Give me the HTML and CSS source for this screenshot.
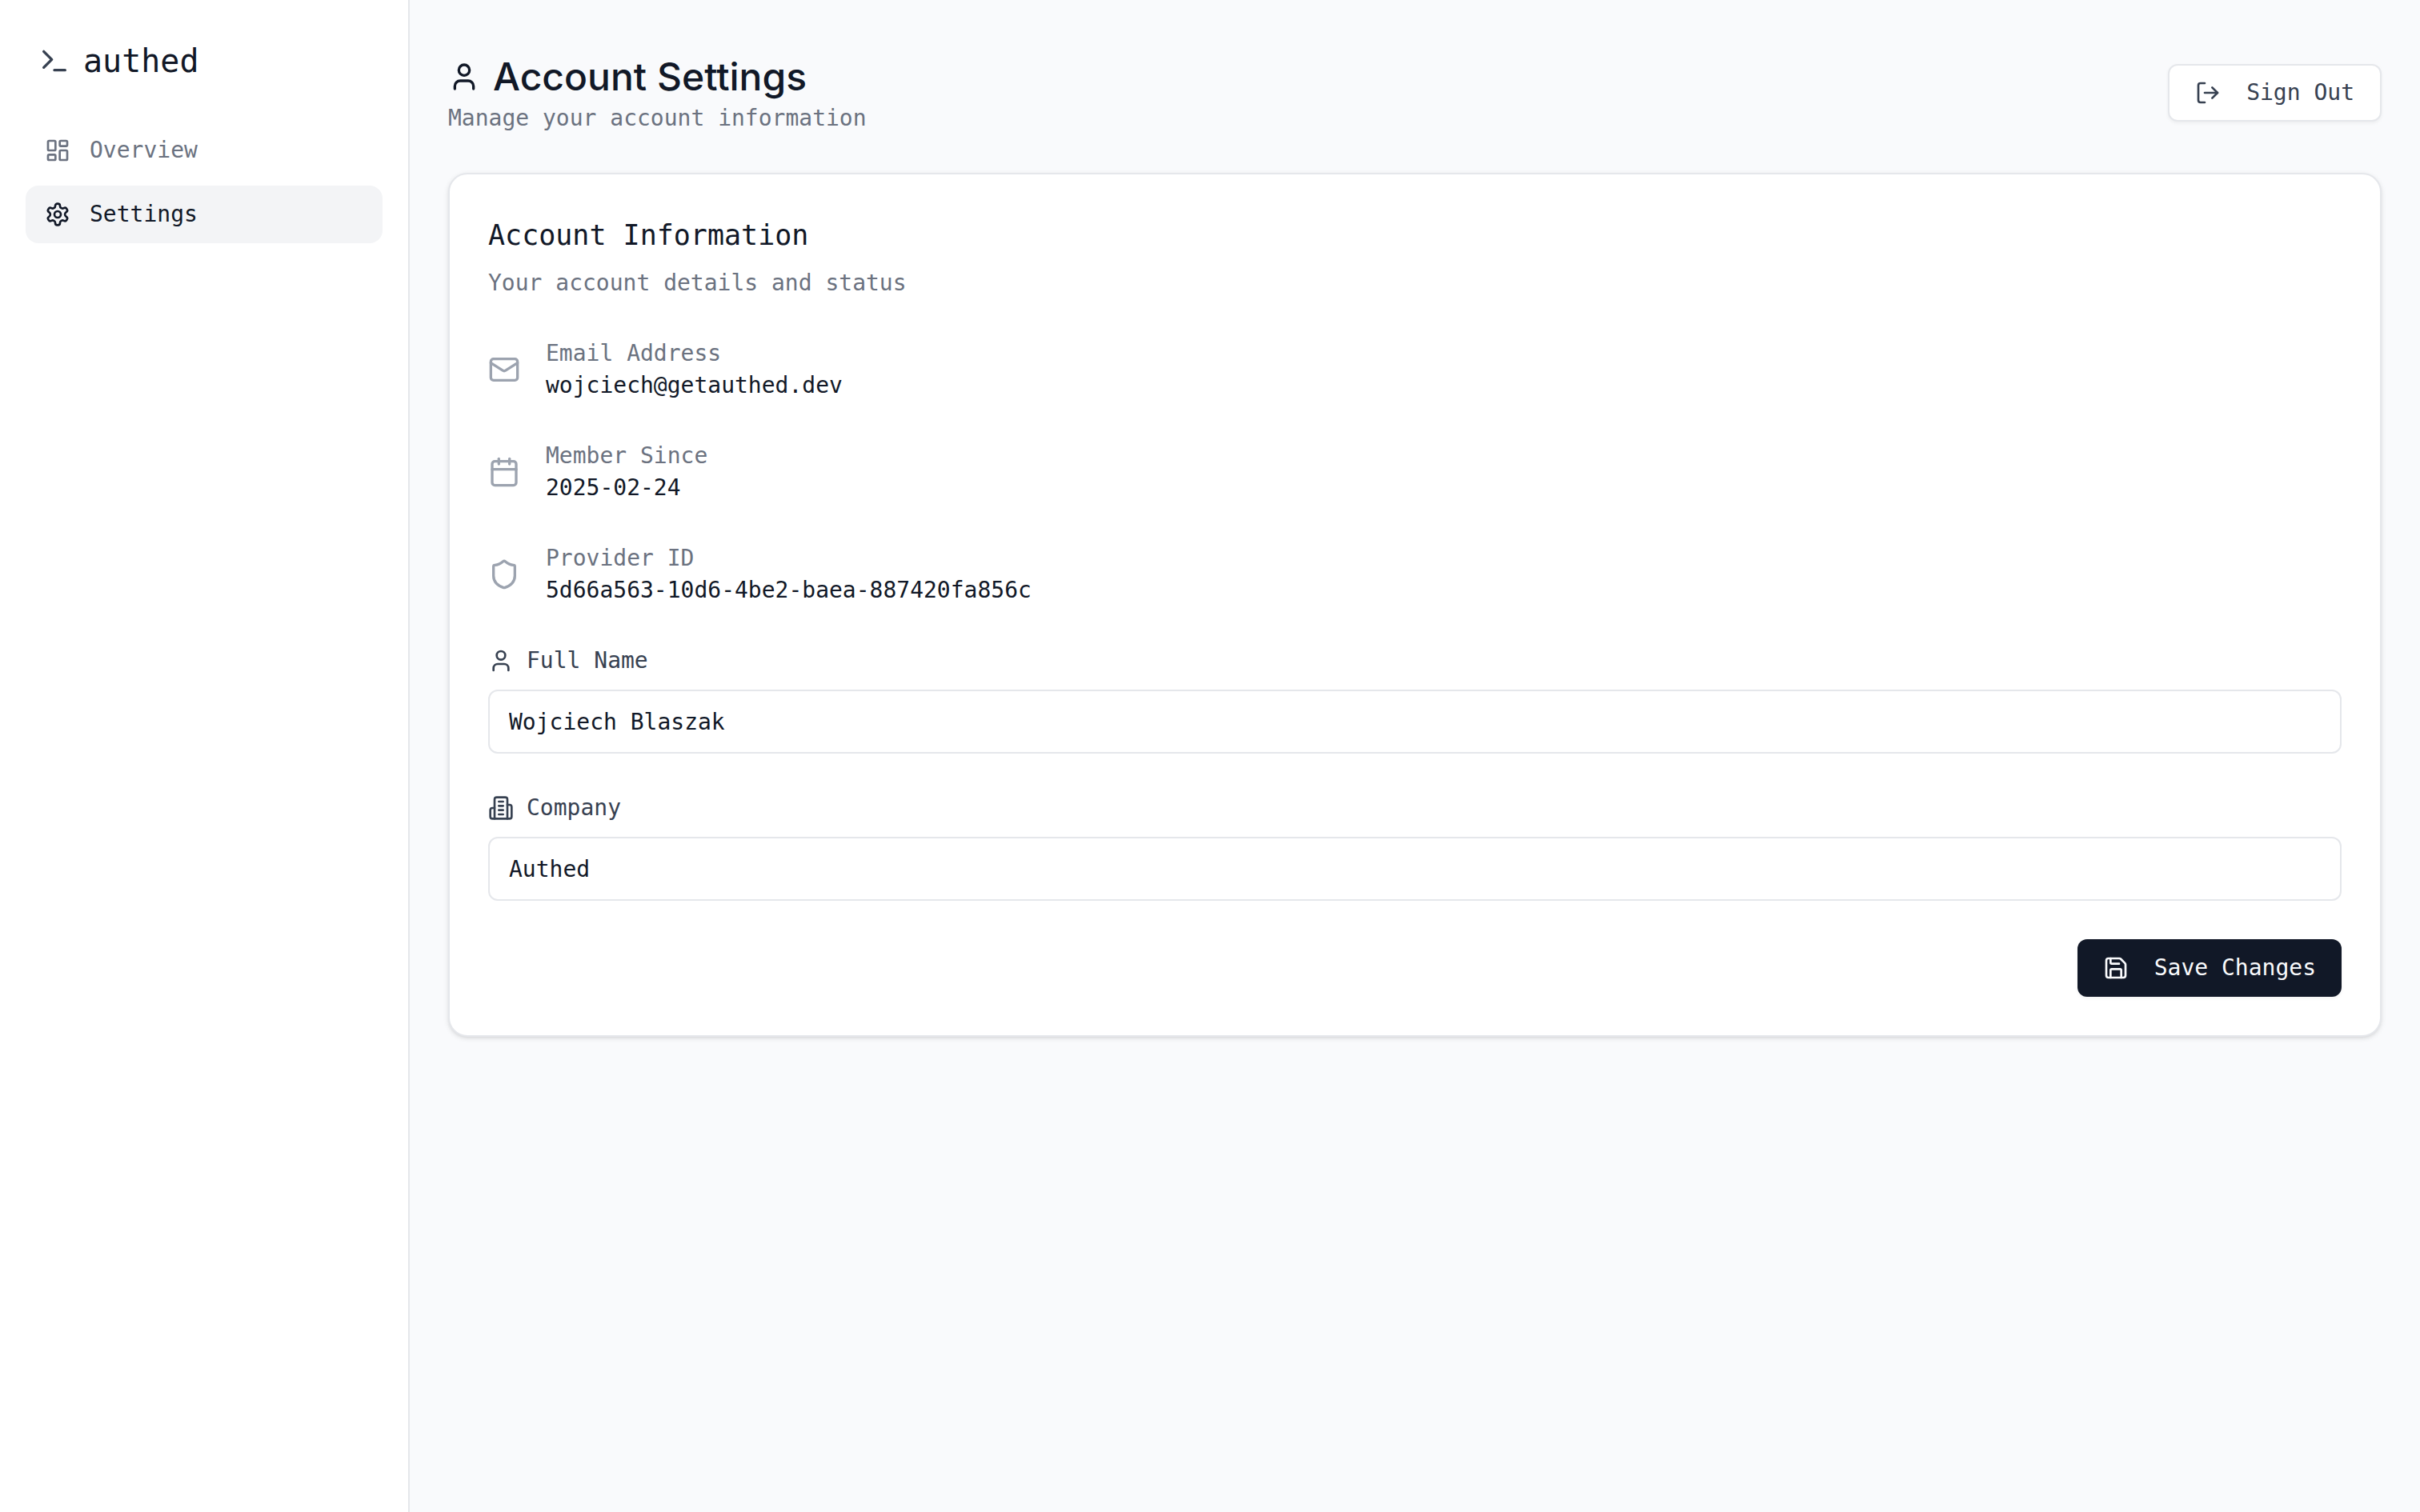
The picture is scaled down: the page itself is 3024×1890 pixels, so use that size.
FILE: index.html
```html
<!DOCTYPE html>
<html lang="en">
<head>
  <meta charset="utf-8">
  <meta name="viewport" content="width=device-width, initial-scale=1">
  <title>Account Settings · authed</title>
  <link rel="stylesheet" href="styles.css">
</head>
<body>
  <div class="app">
    <aside class="sidebar">
      <a class="logo" href="#">
        <svg class="icon icon-lg" viewBox="0 0 24 24" aria-hidden="true"><path d="m4 17 6-6-6-6"/><path d="M12 19h8"/></svg>
        <span>authed</span>
      </a>
      <nav class="nav">
        <a class="nav-link" href="#">
          <svg class="icon" viewBox="0 0 24 24" aria-hidden="true"><rect width="7" height="9" x="3" y="3" rx="1"/><rect width="7" height="5" x="14" y="3" rx="1"/><rect width="7" height="9" x="14" y="12" rx="1"/><rect width="7" height="5" x="3" y="16" rx="1"/></svg>
          <span>Overview</span>
        </a>
        <a class="nav-link active" href="#" aria-current="page">
          <svg class="icon" viewBox="0 0 24 24" aria-hidden="true"><path d="M12.22 2h-.44a2 2 0 0 0-2 2v.18a2 2 0 0 1-1 1.73l-.43.25a2 2 0 0 1-2 0l-.15-.08a2 2 0 0 0-2.73.73l-.22.38a2 2 0 0 0 .73 2.73l.15.1a2 2 0 0 1 1 1.72v.51a2 2 0 0 1-1 1.74l-.15.09a2 2 0 0 0-.73 2.73l.22.38a2 2 0 0 0 2.73.73l.15-.08a2 2 0 0 1 2 0l.43.25a2 2 0 0 1 1 1.73V20a2 2 0 0 0 2 2h.44a2 2 0 0 0 2-2v-.18a2 2 0 0 1 1-1.73l.43-.25a2 2 0 0 1 2 0l.15.08a2 2 0 0 0 2.73-.73l.22-.39a2 2 0 0 0-.73-2.73l-.15-.08a2 2 0 0 1-1-1.74v-.5a2 2 0 0 1 1-1.74l.15-.09a2 2 0 0 0 .73-2.73l-.22-.38a2 2 0 0 0-2.73-.73l-.15.08a2 2 0 0 1-2 0l-.43-.25a2 2 0 0 1-1-1.73V4a2 2 0 0 0-2-2z"/><circle cx="12" cy="12" r="3"/></svg>
          <span>Settings</span>
        </a>
      </nav>
    </aside>

    <main class="main">
      <header class="page-header">
        <div>
          <h1 class="page-title">
            <svg class="icon icon-lg" viewBox="0 0 24 24" aria-hidden="true"><path d="M19 21v-2a4 4 0 0 0-4-4H9a4 4 0 0 0-4 4v2"/><circle cx="12" cy="7" r="4"/></svg>
            <span>Account Settings</span>
          </h1>
          <p class="muted">Manage your account information</p>
        </div>
        <button class="button button-outline" type="button">
          <svg class="icon" viewBox="0 0 24 24" aria-hidden="true"><path d="M9 21H5a2 2 0 0 1-2-2V5a2 2 0 0 1 2-2h4"/><path d="m16 17 5-5-5-5"/><path d="M21 12H9"/></svg>
          <span>Sign Out</span>
        </button>
      </header>

      <section class="card">
        <div class="card-header">
          <h2 class="card-title">Account Information</h2>
          <p class="muted">Your account details and status</p>
        </div>

        <dl class="details">
          <div class="detail">
            <svg class="icon icon-lg" viewBox="0 0 24 24" aria-hidden="true"><rect width="20" height="16" x="2" y="4" rx="2"/><path d="m22 7-8.97 5.7a1.94 1.94 0 0 1-2.06 0L2 7"/></svg>
            <div>
              <dt class="muted">Email Address</dt>
              <dd class="value">wojciech@getauthed.dev</dd>
            </div>
          </div>
          <div class="detail">
            <svg class="icon icon-lg" viewBox="0 0 24 24" aria-hidden="true"><path d="M8 2v4"/><path d="M16 2v4"/><rect width="18" height="18" x="3" y="4" rx="2"/><path d="M3 10h18"/></svg>
            <div>
              <dt class="muted">Member Since</dt>
              <dd class="value">2025-02-24</dd>
            </div>
          </div>
          <div class="detail">
            <svg class="icon icon-lg" viewBox="0 0 24 24" aria-hidden="true"><path d="M20 13c0 5-3.5 7.5-7.66 8.95a1 1 0 0 1-.67-.01C7.5 20.5 4 18 4 13V6a1 1 0 0 1 1-1c2 0 4.5-1.2 6.24-2.72a1.17 1.17 0 0 1 1.52 0C14.51 3.81 17 5 19 5a1 1 0 0 1 1 1z"/></svg>
            <div>
              <dt class="muted">Provider ID</dt>
              <dd class="value">5d66a563-10d6-4be2-baea-887420fa856c</dd>
            </div>
          </div>
        </dl>

        <form class="form">
          <div class="field">
            <label class="label" for="full-name">
              <svg class="icon" viewBox="0 0 24 24" aria-hidden="true"><path d="M19 21v-2a4 4 0 0 0-4-4H9a4 4 0 0 0-4 4v2"/><circle cx="12" cy="7" r="4"/></svg>
              <span>Full Name</span>
            </label>
            <input class="input" id="full-name" name="name" type="text" value="Wojciech Blaszak">
          </div>
          <div class="field">
            <label class="label" for="company">
              <svg class="icon" viewBox="0 0 24 24" aria-hidden="true"><path d="M6 22V4a2 2 0 0 1 2-2h8a2 2 0 0 1 2 2v18Z"/><path d="M6 12H4a2 2 0 0 0-2 2v6a2 2 0 0 0 2 2h2"/><path d="M18 9h2a2 2 0 0 1 2 2v9a2 2 0 0 1-2 2h-2"/><path d="M10 6h4"/><path d="M10 10h4"/><path d="M10 14h4"/><path d="M10 18h4"/></svg>
              <span>Company</span>
            </label>
            <input class="input" id="company" name="company" type="text" value="Authed">
          </div>
          <div class="actions">
            <button class="button button-primary" type="submit">
              <svg class="icon" viewBox="0 0 24 24" aria-hidden="true"><path d="M15.2 3a2 2 0 0 1 1.4.6l3.8 3.8a2 2 0 0 1 .6 1.4V19a2 2 0 0 1-2 2H5a2 2 0 0 1-2-2V5a2 2 0 0 1 2-2z"/><path d="M17 21v-7a1 1 0 0 0-1-1H8a1 1 0 0 0-1 1v7"/><path d="M7 3v4a1 1 0 0 0 1 1h7"/></svg>
              <span>Save Changes</span>
            </button>
          </div>
        </form>
      </section>
    </main>
  </div>
</body>
</html>
```
FILE: styles.css
```css
:root {
  --gray-50: #f9fafc;
  --gray-100: #f3f4f6;
  --gray-200: #e5e7eb;
  --gray-400: #9ca3af;
  --gray-500: #6b7280;
  --gray-700: #374151;
  --gray-900: #111827;
  --mono: "DejaVu Sans Mono", monospace;
}

*,
*::before,
*::after {
  box-sizing: border-box;
}

body {
  margin: 0;
  background: var(--gray-50);
  color: var(--gray-900);
  font-family: var(--mono);
  font-size: 28px;
  line-height: 40px;
}

h1,
h2,
p,
dl,
dd {
  margin: 0;
  font-weight: 400;
}

a {
  color: inherit;
  text-decoration: none;
}

.icon {
  flex: none;
  width: 32px;
  height: 32px;
  fill: none;
  stroke: currentColor;
  stroke-width: 2;
  stroke-linecap: round;
  stroke-linejoin: round;
}

.icon-lg {
  width: 40px;
  height: 40px;
}

.muted {
  color: var(--gray-500);
}

.app {
  display: flex;
  min-height: 100vh;
}

/* Sidebar */
.sidebar {
  flex: none;
  width: 512px;
  padding: 48px 32px;
  background: #fff;
  border-right: 2px solid var(--gray-200);
}

.logo {
  display: flex;
  align-items: center;
  gap: 16px;
  padding: 0 16px;
  font-size: 40px;
  line-height: 56px;
}

.logo .icon {
  color: var(--gray-700);
}

.nav {
  display: flex;
  flex-direction: column;
  gap: 8px;
  margin-top: 48px;
}

.nav-link {
  display: flex;
  align-items: center;
  gap: 24px;
  padding: 16px 24px;
  border-radius: 16px;
  color: var(--gray-500);
}

.nav-link.active {
  background: var(--gray-100);
  color: var(--gray-900);
}

/* Main column */
.main {
  flex: 1;
  min-width: 0;
  padding: 64px 48px;
}

.page-header {
  display: flex;
  align-items: center;
  justify-content: space-between;
  margin-bottom: 48px;
}

.page-title {
  display: flex;
  align-items: center;
  gap: 16px;
  font-family: Inter, sans-serif;
  font-size: 48px;
  font-weight: 500;
  line-height: 64px;
}

/* Buttons */
.button {
  display: inline-flex;
  align-items: center;
  gap: 32px;
  height: 72px;
  padding: 0 32px;
  border: 0;
  border-radius: 12px;
  font: inherit;
  box-shadow: 0 2px 4px rgba(0, 0, 0, 0.05);
  cursor: pointer;
}

.button-outline {
  background: #fff;
  border: 2px solid var(--gray-200);
  color: var(--gray-700);
}

.button-primary {
  background: var(--gray-900);
  color: var(--gray-50);
}

/* Card */
.card {
  display: flex;
  flex-direction: column;
  gap: 48px;
  padding: 48px;
  background: #fff;
  border: 2px solid var(--gray-200);
  border-radius: 24px;
  box-shadow: 0 2px 6px rgba(0, 0, 0, 0.1), 0 2px 4px -2px rgba(0, 0, 0, 0.1);
}

.card-header {
  display: flex;
  flex-direction: column;
  gap: 12px;
}

.card-title {
  font-size: 35px;
  line-height: 56px;
}

.details,
.form {
  display: flex;
  flex-direction: column;
  gap: 48px;
}

.detail {
  display: flex;
  align-items: center;
  gap: 32px;
}

.detail .icon {
  color: var(--gray-400);
}

.field {
  display: flex;
  flex-direction: column;
  gap: 16px;
}

.label {
  display: flex;
  align-items: center;
  gap: 16px;
  color: var(--gray-700);
}

.input {
  width: 100%;
  height: 80px;
  padding: 0 24px;
  background: #fff;
  border: 2px solid var(--gray-200);
  border-radius: 12px;
  color: var(--gray-900);
  font: inherit;
}

.actions {
  display: flex;
  justify-content: flex-end;
}
```
